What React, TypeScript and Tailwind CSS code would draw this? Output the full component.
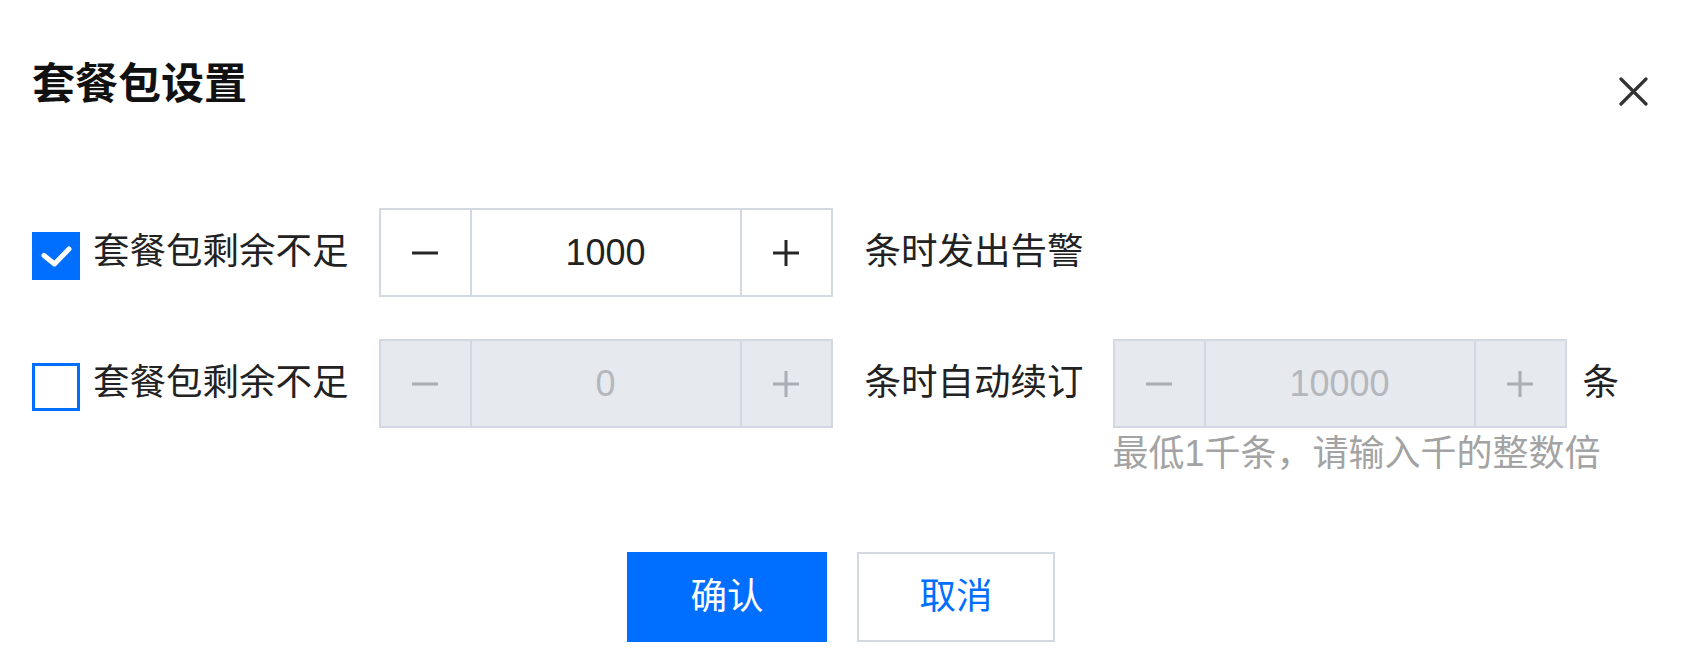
import React from "react";

const FONT = "font-['Liberation_Sans','Noto_Sans_CJK_SC',sans-serif]";

function Checkbox({ checked }: { checked: boolean }) {
  return checked ? (
    <span className="mt-[6px] flex h-[48px] w-[48px] shrink-0 items-center justify-center bg-[#006eff]">
      <svg width="48" height="48" viewBox="0 0 48 48" fill="none">
        <path
          d="M12 23.5 L22.5 32 L37 17"
          stroke="#fff"
          strokeWidth="5"
          strokeLinecap="round"
          strokeLinejoin="round"
        />
      </svg>
    </span>
  ) : (
    <span className="mt-[6px] block h-[48px] w-[48px] shrink-0 border-[3px] border-[#006eff] bg-white" />
  );
}

function Sign({ plus, disabled }: { plus?: boolean; disabled?: boolean }) {
  const c = disabled ? "#a9adb4" : "#262626";
  return (
    <svg width="26" height="26" viewBox="0 0 26 26">
      <line x1="0" y1="13" x2="26" y2="13" stroke={c} strokeWidth="3" />
      {plus && <line x1="13" y1="0" x2="13" y2="26" stroke={c} strokeWidth="3" />}
    </svg>
  );
}

function Stepper({ value, disabled }: { value: string; disabled?: boolean }) {
  const bg = disabled ? "bg-[#e6e9ee]" : "bg-white";
  return (
    <div className={`flex h-[89px] w-[454px] shrink-0 border-2 border-[#d3d9e2] ${bg}`}>
      <div className="flex w-[89px] items-center justify-center">
        <Sign disabled={disabled} />
      </div>
      <div
        className={`flex flex-1 items-center justify-center border-x-2 border-[#d3d9e2] text-[36px] leading-none ${
          disabled ? "text-[#b4b7bd]" : "text-[#222]"
        }`}
      >
        {value}
      </div>
      <div className="flex w-[89px] items-center justify-center">
        <Sign plus disabled={disabled} />
      </div>
    </div>
  );
}

function Label({ children }: { children: React.ReactNode }) {
  return (
    <span className="flex h-[89px] items-center whitespace-nowrap text-[36.5px] leading-none text-[#222]">
      {children}
    </span>
  );
}

export default function App() {
  return (
    <div className={`h-[664px] w-[1690px] bg-white ${FONT}`}>
      <div className="flex items-start justify-between pl-[32px] pr-[42px] pt-[63px]">
        <h1 className="text-[43px] font-bold leading-none text-[#111]">套餐包设置</h1>
        <button className="mt-[14px]">
          <svg width="29" height="29" viewBox="0 0 29 29">
            <path d="M2 2 L27 27 M27 2 L2 27" stroke="#333" strokeWidth="3.2" strokeLinecap="round" />
          </svg>
        </button>
      </div>

      <div className="mt-[102px] flex items-center pl-[32px]">
        <Checkbox checked />
        <span className="ml-[13px]">
          <Label>套餐包剩余不足</Label>
        </span>
        <span className="ml-[30px]">
          <Stepper value="1000" />
        </span>
        <span className="ml-[32px]">
          <Label>条时发出告警</Label>
        </span>
      </div>

      <div className="mt-[42px] flex items-start pl-[32px]">
        <div className="flex h-[89px] items-center">
          <Checkbox checked={false} />
        </div>
        <span className="ml-[13px]">
          <Label>套餐包剩余不足</Label>
        </span>
        <span className="ml-[30px]">
          <Stepper value="0" disabled />
        </span>
        <span className="ml-[32px]">
          <Label>条时自动续订</Label>
        </span>
        <div className="ml-[29px] flex w-[454px] shrink-0 flex-col">
          <Stepper value="10000" disabled />
          <span className="mt-[8px] whitespace-nowrap text-[36px] leading-none text-[#a3a3a3]">
            最低1千条，请输入千的整数倍
          </span>
        </div>
        <span className="ml-[16px]">
          <Label>条</Label>
        </span>
      </div>

      <div className="mt-[80px] flex justify-center gap-[30px] pr-[8px]">
        <button className="flex h-[90px] w-[200px] items-center justify-center bg-[#006eff] text-[36.5px] leading-none text-white">
          确认
        </button>
        <button className="flex h-[90px] w-[198px] items-center justify-center border-2 border-[#d3d9e2] bg-white text-[36.5px] leading-none text-[#006eff]">
          取消
        </button>
      </div>
    </div>
  );
}
